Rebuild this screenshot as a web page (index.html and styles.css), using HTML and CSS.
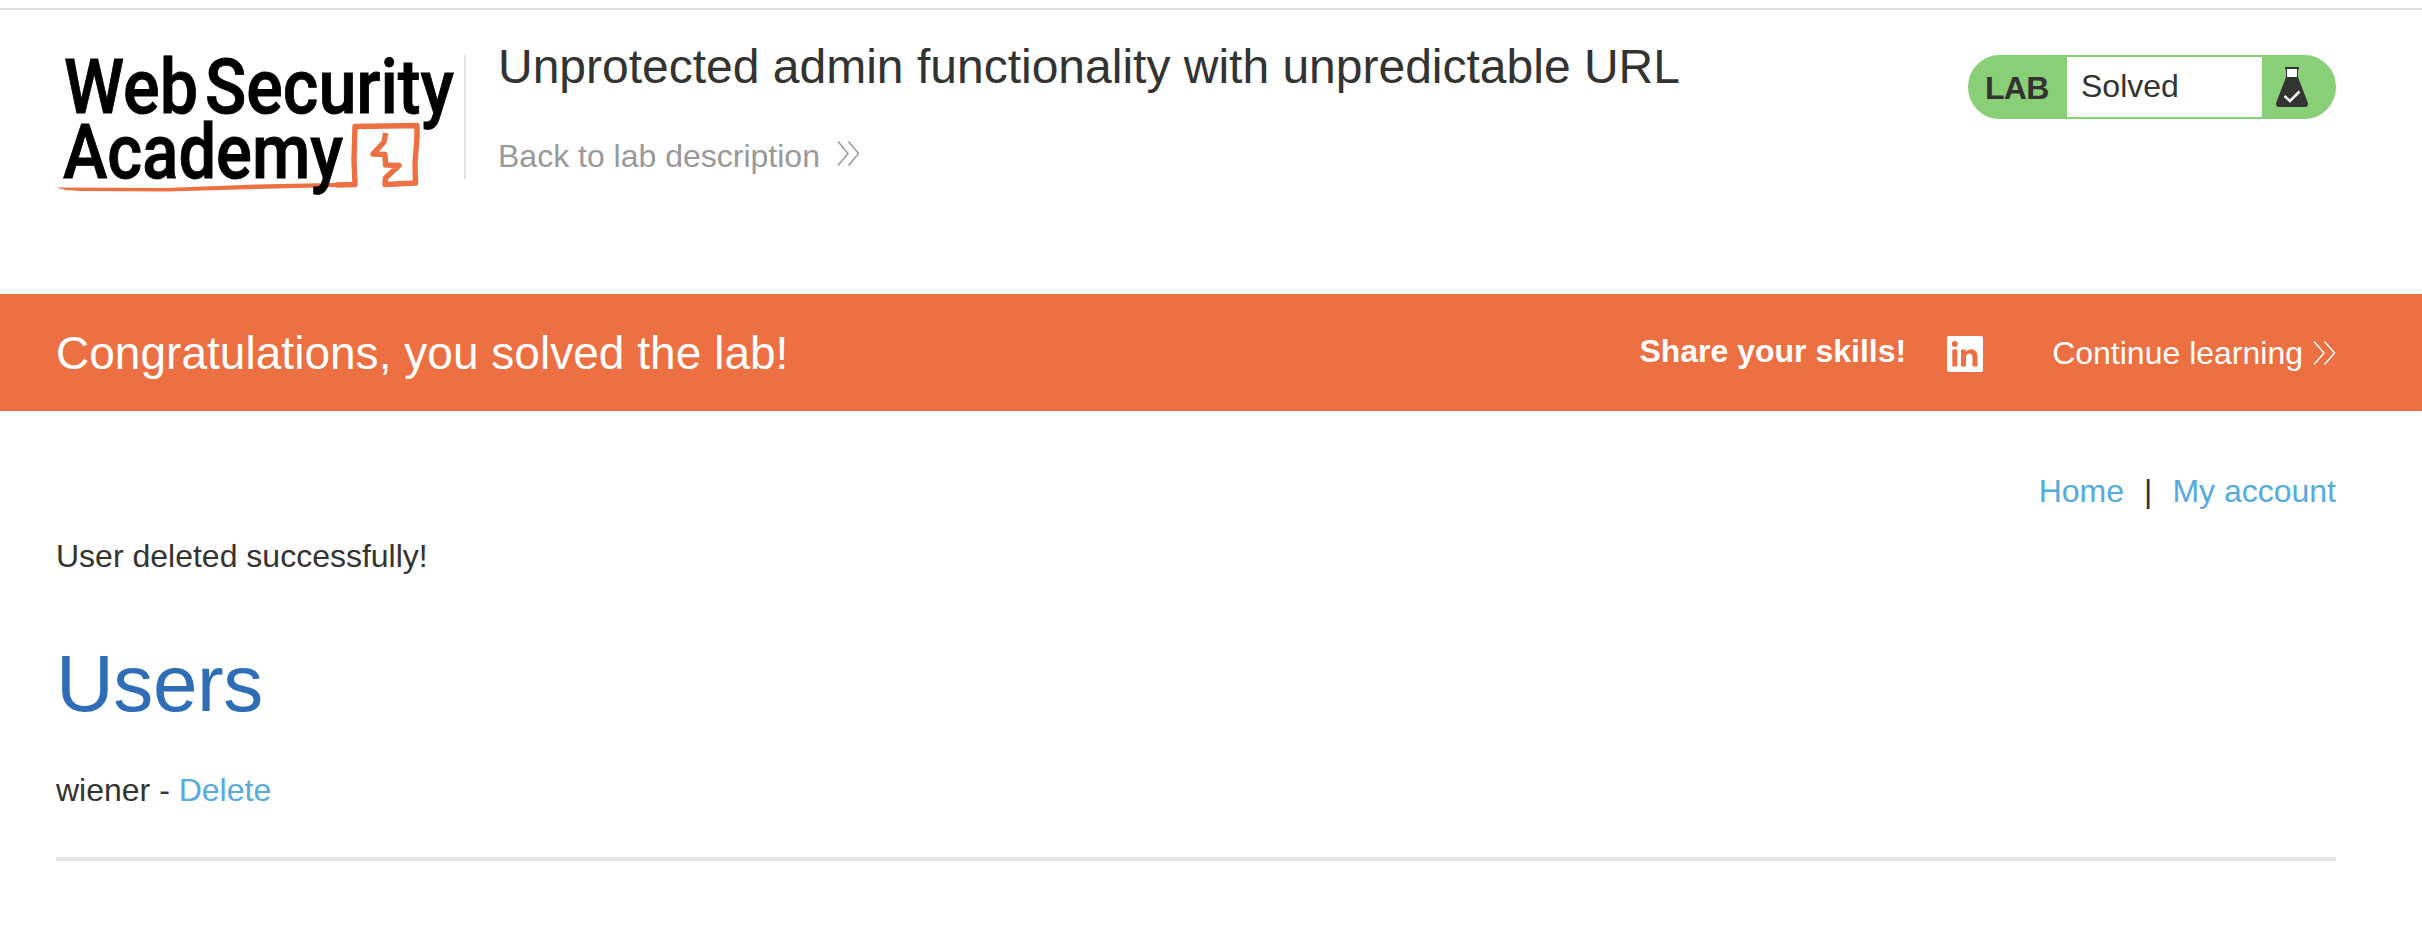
FILE: index.html
```html
<!DOCTYPE html>
<html lang="en">
<head>
<meta charset="utf-8">
<title>Unprotected admin functionality with unpredictable URL</title>
<link rel="stylesheet" href="styles.css">
</head>
<body>
<header class="header">
  <a class="logo">
    <svg width="408" height="150" viewBox="0 0 408 150">
      <path class="logo-underline" d="M0 132.500 L110 133 L200 129.500 L301 127.500 L301 131.500 L200 134 L110 136.500 L25 136 Q8 135.500 0 132.500Z"/>
      <path class="logo-line" d="M280 130 L299 129.500 L298 105 L299 71.500 L361 70.500 L361 82 L359 108 L359.500 128 L329 129.500 L329.500 123 L343 110.500 L329.500 110 L329 99.500 L317 99 L328 87 L329.700 78"/>
      <g class="logo-text">
        <text x="8" y="57.500" textLength="134" lengthAdjust="spacingAndGlyphs">Web</text>
        <text x="149" y="57.500" textLength="249" lengthAdjust="spacingAndGlyphs">Security</text>
        <text x="7" y="122.500" textLength="280" lengthAdjust="spacingAndGlyphs">Academy</text>
      </g>
    </svg>
  </a>
  <div class="heading">
    <h2 class="title">Unprotected admin functionality with unpredictable URL</h2>
    <a class="back"><span>Back to lab description</span>
      <svg class="arrows" width="24" height="26" viewBox="0 0 24 26"><path d="M1 1.500 11 13.500 1 25.500M11.500 1.500 21.500 13.500 11.500 25.500"/></svg></a>
  </div>
  <div class="status">
    <span class="status-lab">LAB</span>
    <p class="status-text">Solved</p>
    <span class="status-icon">
      <svg width="34" height="42" viewBox="0 0 34 42"><path fill="#333332" d="M11 11H23L32.500 36Q34 40.500 30 41H4Q0 40.500 1.500 36Z"/><path fill="#fff" d="M12 3H22V11H12Z"/><path fill="#333332" d="M10 1H24V3.500H23V11H22V3H12V11H11V3.500H10Z"/><path fill="none" stroke="#fff" stroke-width="2.500" d="M9.500 30 15 35 24.500 25.500"/></svg>
    </span>
  </div>
</header>
<section class="banner">
  <h4 class="congrats">Congratulations, you solved the lab!</h4>
  <div class="share">
    <span class="share-label">Share your skills!</span>
    <svg class="linkedin" width="36" height="36" viewBox="0 0 36 36"><rect width="36" height="36" rx="2" fill="#fff"/><path fill="#ed7042" d="M5.300 13.500H10.300V30.500H5.300ZM14 13.500H18.800V16C22 11.500 30.500 12.500 30.500 20.500V30.500H25.500V21.500C25.500 16 19 16 19 21.500V30.500H14Z"/><circle cx="7.800" cy="8" r="3" fill="#ed7042"/></svg>
    <a class="continue"><span>Continue learning</span>
      <svg class="arrows" width="23" height="26" viewBox="0 0 23 26"><path d="M1 1.500 11 13 1 24.500M11.500 1.500 21.500 13 11.500 24.500"/></svg></a>
  </div>
</section>
<main class="main">
  <nav class="nav"><a class="link">Home</a><span>|</span><a class="link">My account</a></nav>
  <p class="message">User deleted successfully!</p>
  <h1 class="users">Users</h1>
  <p class="user">wiener - <a class="link">Delete</a></p>
  <hr class="rule">
</main>
</body>
</html>
```
FILE: styles.css
```css
* { box-sizing: border-box; margin: 0; padding: 0; }
body {
  padding-top: 8px;
  background: #fff;
  color: #333332;
  font: 32px/40px "Liberation Sans", Arial, sans-serif;
  white-space: nowrap;
}
.header {
  display: flex;
  align-items: flex-start;
  height: 286px;
  padding: 45px 86px 0 56px;
  border-top: 2px solid #dcdcdc;
}
.logo {
  height: 124px;
  width: 410px;
  border-right: 2px solid #e5e5e5;
}
.logo svg { display: block; overflow: visible; }
.logo-text { font: 500 76px Roboto, sans-serif; fill: #000; stroke: #000; stroke-width: 0.9; }
.logo-line { fill: none; stroke: #ed7042; stroke-width: 5.4; stroke-linejoin: round; }
.logo-underline { fill: #ed7042; }
.heading { flex: 1; padding-left: 32px; }
.title {
  margin-top: -18px;
  font-size: 48px;
  line-height: 60px;
  font-weight: 400;
}
.back {
  display: flex;
  align-items: flex-start;
  gap: 17px;
  margin-top: 39px;
  color: #999;
}
.arrows { margin-top: 6px; fill: none; stroke: currentColor; stroke-width: 1.5; }
.back .arrows { margin-top: 4px; }
.status {
  display: flex;
  width: 368px;
  height: 64px;
  overflow: hidden;
  border: 2px solid #89cf78;
  border-radius: 32px;
  background: #89cf78;
}
.status-lab { width: 97px; padding: 11px 0 0 15px; font-weight: 700; letter-spacing: -0.7px; }
.status-text { width: 195px; padding: 9px 0 0 14px; background: #fff; }
.status-icon { padding: 9px 0 0 13px; }
.status-icon svg { display: block; }
.banner {
  display: flex;
  justify-content: space-between;
  height: 117px;
  padding: 0 86px 0 56px;
  background: #ed7042;
  color: #fff;
}
.congrats { padding-top: 29px; font-size: 46px; line-height: 60px; font-weight: 400; letter-spacing: 0.03px; }
.share { display: flex; align-items: flex-start; }
.share-label { padding-top: 37px; font-weight: 700; }
.linkedin { margin: 42px 69px 0 41px; }
.continue { display: flex; gap: 10px; padding-top: 39px; }
.continue .arrows { margin-top: 7px; }
.main { padding: 60px 86px 0 56px; }
.nav { display: flex; justify-content: flex-end; gap: 20px; }
.link { color: #55aae0; }
.message { margin-top: 25px; }
.users { margin-top: 58px; font-size: 80px; line-height: 100px; font-weight: 400; letter-spacing: -0.4px; color: #2f6eb7; }
.user { margin-top: 36px; }
.rule { margin-top: 47px; height: 4px; border: 0; background: #e5e5e5; }
```
